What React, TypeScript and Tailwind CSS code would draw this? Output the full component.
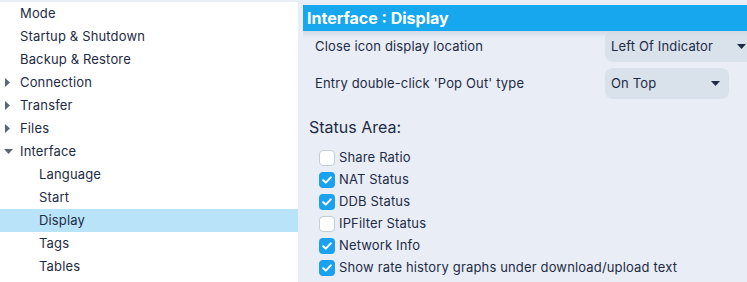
import React from 'react';

type Node = { label: string; depth: number; arrow?: 'right' | 'down'; selected?: boolean };

const tree: Node[] = [
  { label: 'Mode', depth: 0 },
  { label: 'Startup & Shutdown', depth: 0 },
  { label: 'Backup & Restore', depth: 0 },
  { label: 'Connection', depth: 0, arrow: 'right' },
  { label: 'Transfer', depth: 0, arrow: 'right' },
  { label: 'Files', depth: 0, arrow: 'right' },
  { label: 'Interface', depth: 0, arrow: 'down' },
  { label: 'Language', depth: 1 },
  { label: 'Start', depth: 1 },
  { label: 'Display', depth: 1, selected: true },
  { label: 'Tags', depth: 1 },
  { label: 'Tables', depth: 1 },
];

const checks = [
  { label: 'Share Ratio', on: false },
  { label: 'NAT Status', on: true },
  { label: 'DDB Status', on: true },
  { label: 'IPFilter Status', on: false },
  { label: 'Network Info', on: true },
  { label: 'Show rate history graphs under download/upload text', on: true },
];

const Arrow = ({ dir }: { dir: 'right' | 'down' }) =>
  dir === 'right' ? (
    <svg width="6" height="9" viewBox="0 0 6 9" className="absolute left-[5px]">
      <path d="M0 0 L5 4.5 L0 9 Z" fill="#5b6778" />
    </svg>
  ) : (
    <svg width="9" height="6" viewBox="0 0 9 6" className="absolute left-[4px]">
      <path d="M0 0 L9 0 L4.5 5 Z" fill="#5b6778" />
    </svg>
  );

const Caret = () => (
  <svg width="9" height="5" viewBox="0 0 9 5">
    <path d="M0 0 L9 0 L4.5 5 Z" fill="#1e2b45" />
  </svg>
);

const App: React.FC = () => {
  return (
    <div
      className="w-[747px] h-[282px] overflow-hidden bg-[#e9eef6] flex text-[#1e2b45] text-[13px] tracking-[0.15px]"
      style={{ fontFamily: 'Inter, "Noto Sans", sans-serif' }}
    >
      {/* Tree */}
      <div className="w-[298px] mt-[2px] bg-white flex flex-col shrink-0">
        {tree.map((n, i) => (
          <div
            key={i}
            className={`relative h-[23px] flex items-center ${n.selected ? 'bg-[#b8e3f8]' : ''}`}
          >
            {n.arrow && <Arrow dir={n.arrow} />}
            <span className={n.depth ? 'pl-[39px]' : 'pl-[20px]'}>{n.label}</span>
          </div>
        ))}
      </div>

      {/* Settings */}
      <div className="flex-1 flex flex-col pl-[5px] pt-[5px] min-w-0">
        <div className="h-[26px] bg-[#16a7ef] text-white font-bold text-[16px] tracking-normal flex items-center pl-[4px] shrink-0">
          Interface : Display
        </div>
        <div className="relative flex-1 overflow-hidden">
          <div className="absolute inset-x-0 top-0 h-[7px] bg-gradient-to-b from-[#d3dae4] to-transparent z-10" />
          <div className="flex items-center h-[31px]">
            <span className="w-[302px] pl-[12px] shrink-0">Close icon display location</span>
            <div className="h-[31px] w-[150px] shrink-0 rounded-[8px] bg-[#d9e1ea] flex items-center justify-between pl-[6px] pr-[9px]">
              <span>Left Of Indicator</span>
              <Caret />
            </div>
          </div>
          <div className="flex items-center h-[31px] mt-[6px]">
            <span className="w-[302px] pl-[12px] shrink-0">Entry double-click 'Pop Out' type</span>
            <div className="h-[31px] w-[124px] shrink-0 rounded-[8px] bg-[#d9e1ea] flex items-center justify-between pl-[6px] pr-[9px]">
              <span>On Top</span>
              <Caret />
            </div>
          </div>
          <div className="pl-[6px] mt-[18px] text-[16px] leading-[20px] tracking-normal">Status Area:</div>
          <div className="flex flex-col pl-[16px] mt-[10px]">
            {checks.map((c, i) => (
              <label key={i} className="h-[22px] flex items-center gap-[4px]">
                {c.on ? (
                  <span className="w-[16px] h-[16px] rounded-[4px] bg-[#1ba2ee] flex items-center justify-center">
                    <svg width="10" height="8" viewBox="0 0 10 8">
                      <path d="M1.2 4.2 L3.8 6.6 L8.8 1.4" stroke="white" strokeWidth="2" fill="none" strokeLinecap="round" strokeLinejoin="round" />
                    </svg>
                  </span>
                ) : (
                  <span className="w-[16px] h-[16px] rounded-[4px] bg-white border border-[#c5cdd8]" />
                )}
                <span>{c.label}</span>
              </label>
            ))}
          </div>
        </div>
      </div>
    </div>
  );
};

export default App;
